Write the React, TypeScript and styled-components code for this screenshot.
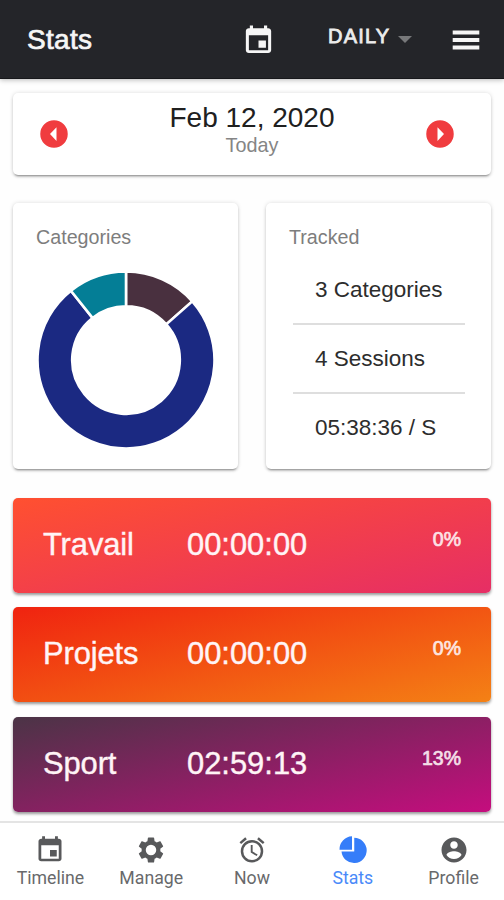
import React from 'react';
import styled, { createGlobalStyle } from 'styled-components';

const Global = createGlobalStyle`
  * { box-sizing: border-box; }
  body { margin: 0; background: #fff; font-family: "Liberation Sans", Arial, sans-serif; }
`;

const Screen = styled.div`
  width: 504px;
  height: 900px;
  display: flex;
  flex-direction: column;
  overflow: hidden;
  background: #fefefe;
`;

const Header = styled.header`
  height: 79px;
  flex: none;
  display: flex;
  align-items: center;
  padding: 2px 24px 0 27px;
  background: #242529;
  border-bottom: 1px solid #17181b;
  box-shadow: 0 1px 5px rgba(0, 0, 0, 0.28);
  color: #f6f6f6;
  z-index: 1;
`;

const Title = styled.h1`
  margin: 0;
  width: 215px;
  font-size: 28px;
  line-height: 32px;
  font-weight: 400;
  -webkit-text-stroke: 0.7px currentColor;
  letter-spacing: 0.3px;
`;

const Period = styled.button`
  display: flex;
  align-items: center;
  gap: 7.5px;
  width: 124px;
  margin: 0 0 8px 53px;
  padding: 0;
  border: 0;
  background: none;
  color: #ececec;
  font: 400 20px/24px "Liberation Sans", Arial, sans-serif;
  letter-spacing: 1.2px;
  -webkit-text-stroke: 0.8px currentColor;
`;

const Caret = styled.span`
  margin-top: 6px;
  border: 7px solid transparent;
  border-top-color: #77787a;
  border-bottom: 0;
`;

const Glyph = styled.svg<{ $size: number }>`
  display: block;
  flex: none;
  width: ${p => p.$size}px;
  height: ${p => p.$size}px;
  fill: currentColor;
`;

const Content = styled.main`
  height: 742px;
  flex: none;
  padding: 14px 13px 0;
`;

const Card = styled.section`
  background: #fff;
  border-radius: 5px;
  box-shadow: 0 3px 2px -2px rgba(0, 0, 0, 0.3), 0 2px 3px rgba(0, 0, 0, 0.14), 0 0 4px rgba(0, 0, 0, 0.13);
`;

const DateCard = styled(Card)`
  height: 82px;
  display: flex;
  align-items: center;
  justify-content: space-between;
  padding: 0 36px 0 26px;
`;

const DateText = styled.div`
  text-align: center;
  margin: -11px 0 0 10px;
`;

const DateMain = styled.div`
  font-size: 28px;
  line-height: 32px;
  padding-top: 1px;
  margin-bottom: -1px;
  color: #202020;
`;

const DateSub = styled.div`
  font-size: 19.8px;
  line-height: 24px;
  color: #858585;
`;

const StepButton = styled.button`
  padding: 0;
  border: 0;
  background: none;
  color: #f03c3f;
`;

const Summary = styled.div`
  display: grid;
  grid-template-columns: 225px 225px;
  justify-content: space-between;
  margin: 28px 0 28.5px;
`;

const SummaryCard = styled(Card)`
  height: 266px;
  padding: 22px 23px 0;
`;

const CardTitle = styled.h2`
  margin: 0;
  font-size: 19.7px;
  line-height: 24px;
  font-weight: 400;
  color: #7d7d7d;
`;

const Donut = styled.svg`
  display: block;
  width: 180px;
  height: 180px;
  margin: 21px 0 0 -0.5px;
`;

const StatList = styled.ul`
  list-style: none;
  width: 172px;
  margin: 7px 0 0 4px;
  padding: 0;
`;

const Stat = styled.li`
  height: 69px;
  padding: 0 0 0 22px;
  font-size: 22.5px;
  line-height: 68px;
  color: #2d2d2d;
  white-space: nowrap;
  border-bottom: 2px solid #dedede;
  &:last-child { border: 0; }
`;

const Category = styled.section<{ $from: string; $to: string }>`
  height: 95px;
  margin-bottom: 14.5px;
  padding: 0 30px 1px;
  display: flex;
  align-items: center;
  border-radius: 5px;
  background: linear-gradient(167deg, ${p => p.$from}, ${p => p.$to});
  box-shadow: 0 2px 3px rgba(0, 0, 0, 0.4);
  color: #fff4f6;
  font-size: 30.9px;
  -webkit-text-stroke: 0.4px currentColor;
`;

const CategoryName = styled.div`
  width: 144px;
  letter-spacing: -0.1px;
`;

const Percent = styled.div`
  margin: -11px 0 0 auto;
  font-size: 19.5px;
  -webkit-text-stroke: 0.7px currentColor;
  opacity: 0.9;
`;

const TabBar = styled.nav`
  height: 79px;
  flex: none;
  display: grid;
  grid-template-columns: repeat(5, 1fr);
  border-top: 2px solid #e4e4e4;
  background: #fff;
`;

const Tab = styled.a<{ $active?: boolean }>`
  display: flex;
  flex-direction: column;
  align-items: center;
  padding-top: 12px;
  gap: 1px;
  color: ${p => (p.$active ? '#357df9' : '#58595b')};
  font: 400 17.7px/24px Roboto, sans-serif;
`;

const TabLabel = styled.span`
  opacity: 0.9;
`;

const paths = {
  event: 'M17.4 12h-5.4v5.2h5.4v-5.2zM16 1v2H8V1H5.7v2H5c-1.2 0-2.2.9-2.2 2L2.8 19c0 1.1.9 2 2.2 2h14c1.2 0 2.2-.9 2.2-2V5c0-1.1-1-2-2.2-2h-.7V1H16zm3 18H5V8.2h14v10.8z',
  settings: 'M19.43 12.98c.04-.32.07-.64.07-.98s-.03-.66-.07-.98l2.11-1.65c.19-.15.24-.42.12-.64l-2-3.46c-.12-.22-.39-.3-.61-.22l-2.49 1c-.52-.4-1.08-.73-1.69-.98l-.38-2.65A.488.488 0 0 0 14 2h-4c-.25 0-.46.18-.49.42l-.38 2.65c-.61.25-1.17.59-1.69.98l-2.49-1c-.23-.09-.49 0-.61.22l-2 3.46c-.13.22-.07.49.12.64l2.11 1.65c-.04.32-.07.65-.07.98s.03.66.07.98l-2.11 1.65c-.19.15-.24.42-.12.64l2 3.46c.12.22.39.3.61.22l2.49-1c.52.4 1.08.73 1.69.98l.38 2.65c.03.24.24.42.49.42h4c.25 0 .46-.18.49-.42l.38-2.65c.61-.25 1.17-.59 1.69-.98l2.49 1c.23.09.49 0 .61-.22l2-3.46c.12-.22.07-.49-.12-.64l-2.11-1.65zM12 16.2A4.2 4.2 0 1 1 12 7.8a4.2 4.2 0 0 1 0 8.4z',
  alarm: 'M22 5.72l-4.6-3.86-1.29 1.53 4.6 3.86L22 5.72zM7.88 3.39L6.6 1.86 2 5.71l1.29 1.53 4.59-3.85zM12.5 8H11v6l4.75 2.85.75-1.23-4-2.37V8zM12 4a9 9 0 1 0 0 18 9 9 0 0 0 0-18zm0 16a7 7 0 1 1 0-14 7 7 0 0 1 0 14z',
  pie: 'M11.2 1A10.4 10.4 0 0 0 1.2 11.8H11.2zM13 2.2V13.2H2.8A10.1 10.1 0 1 0 13 2.2z',
  account: 'M12 2C6.48 2 2 6.48 2 12s4.48 10 10 10 10-4.48 10-10S17.52 2 12 2zm0 3c1.66 0 3 1.34 3 3s-1.34 3-3 3-3-1.34-3-3 1.34-3 3-3zm0 14.2a7.2 7.2 0 0 1-6-3.22c.03-1.99 4-3.08 6-3.08 1.99 0 5.97 1.09 6 3.08a7.2 7.2 0 0 1-6 3.22z',
  menu: 'M.6 3.8h22.8v3.5h-22.8zM.6 10.25h22.8v3.5h-22.8zM.6 16.7h22.8v3.5h-22.8z',
  prev: 'M12 1a11 11 0 1 0 0 22 11 11 0 0 0 0-22zm2 16.5L8.8 12 14 6.5z',
  next: 'M12 1a11 11 0 1 0 0 22 11 11 0 0 0 0-22zm-2 16.5v-11l5.2 5.5z',
};

function Icon({ name, size }: { name: keyof typeof paths; size: number }) {
  return (
    <Glyph $size={size} viewBox="0 0 24 24" aria-hidden="true">
      <path d={paths[name]} />
    </Glyph>
  );
}

/* Ring segment between two clockwise angles, measured in degrees from the top. */
function segment(from: number, to: number, outer = 88.5, inner = 53.8) {
  const at = (r: number, deg: number) => {
    const a = (deg * Math.PI) / 180;
    return `${90 + r * Math.sin(a)} ${90 - r * Math.cos(a)}`;
  };
  const large = to - from > 180 ? 1 : 0;
  return `M${at(outer, from)}A${outer} ${outer} 0 ${large} 1 ${at(outer, to)}L${at(inner, to)}A${inner} ${inner} 0 ${large} 0 ${at(inner, from)}Z`;
}

const slices = [
  { from: 0, to: 48.5, color: '#49303f' },
  { from: 48.5, to: 321.5, color: '#1b2982' },
  { from: 321.5, to: 360, color: '#047e96' },
];

const categories = [
  { name: 'Travail', time: '00:00:00', share: '0%', from: '#ff5030', to: '#e62e65' },
  { name: 'Projets', time: '00:00:00', share: '0%', from: '#f02310', to: '#f48115' },
  { name: 'Sport', time: '02:59:13', share: '13%', from: '#4b3446', to: '#c50d7e' },
];

const tabs: { label: string; icon: keyof typeof paths; active?: boolean }[] = [
  { label: 'Timeline', icon: 'event' },
  { label: 'Manage', icon: 'settings' },
  { label: 'Now', icon: 'alarm' },
  { label: 'Stats', icon: 'pie', active: true },
  { label: 'Profile', icon: 'account' },
];

export default function App() {
  return (
    <>
      <Global />
      <Screen>
        <Header>
          <Title>Stats</Title>
          <Icon name="event" size={33} />
          <Period>
            DAILY
            <Caret />
          </Period>
          <Icon name="menu" size={28} />
        </Header>
        <Content>
          <DateCard>
            <StepButton aria-label="Previous day"><Icon name="prev" size={30} /></StepButton>
            <DateText>
              <DateMain>Feb 12, 2020</DateMain>
              <DateSub>Today</DateSub>
            </DateText>
            <StepButton aria-label="Next day"><Icon name="next" size={30} /></StepButton>
          </DateCard>
          <Summary>
            <SummaryCard>
              <CardTitle>Categories</CardTitle>
              <Donut viewBox="0 0 180 180">
                {slices.map(s => (
                  <path key={s.from} d={segment(s.from, s.to)} fill={s.color} stroke="#fff" strokeWidth="2.6" />
                ))}
              </Donut>
            </SummaryCard>
            <SummaryCard>
              <CardTitle>Tracked</CardTitle>
              <StatList>
                <Stat>3 Categories</Stat>
                <Stat>4 Sessions</Stat>
                <Stat>05:38:36 / S</Stat>
              </StatList>
            </SummaryCard>
          </Summary>
          {categories.map(c => (
            <Category key={c.name} $from={c.from} $to={c.to}>
              <CategoryName>{c.name}</CategoryName>
              <div>{c.time}</div>
              <Percent>{c.share}</Percent>
            </Category>
          ))}
        </Content>
        <TabBar>
          {tabs.map(t => (
            <Tab key={t.label} $active={t.active}>
              <Icon name={t.icon} size={30} />
              <TabLabel>{t.label}</TabLabel>
            </Tab>
          ))}
        </TabBar>
      </Screen>
    </>
  );
}
